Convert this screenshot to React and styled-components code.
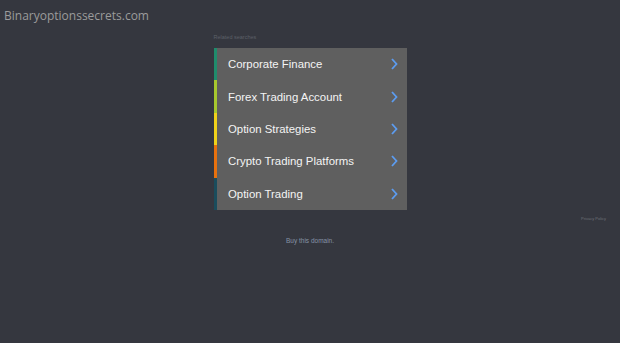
import React from 'react';
import styled, { createGlobalStyle } from 'styled-components';

const GlobalStyle = createGlobalStyle`
  html, body {
    margin: 0;
    padding: 0;
    background: #35373f;
  }
  body {
    font-family: "Liberation Sans", Arial, sans-serif;
  }
`;

const links = [
  { label: 'Corporate Finance', color: '#1f8c6c' },
  { label: 'Forex Trading Account', color: '#a6c82e' },
  { label: 'Option Strategies', color: '#f0d21a' },
  { label: 'Crypto Trading Platforms', color: '#e8710e' },
  { label: 'Option Trading', color: '#1a4c5c' },
];

const Chevron = () => (
  <svg width="7" height="12" viewBox="0 0 7 12" fill="none">
    <path d="M1 1 L5.5 6 L1 11" stroke="#5c9cf0" strokeWidth="1.8" strokeLinejoin="miter" />
  </svg>
);

const App = () => {
  return (
    <Page>
      <GlobalStyle />
      <Header>Binaryoptionssecrets.com</Header>
      <Main>
        <Column>
          <Caption>Related searches</Caption>
          <List>
            {links.map((l) => (
              <Row key={l.label} $accent={l.color}>
                <Label>{l.label}</Label>
                <Chevron />
              </Row>
            ))}
          </List>
        </Column>
        <FooterLine>
          <Privacy>Privacy Policy</Privacy>
        </FooterLine>
        <Buy>Buy this domain.</Buy>
      </Main>
    </Page>
  );
};

export default App;

const Page = styled.div`
  width: 620px;
  height: 343px;
  background: #35373f;
  overflow: hidden;
`;

const Header = styled.div`
  padding: 7px 0 0 4px;
  height: 20px;
  font-family: "Open Sans", sans-serif;
  font-size: 12px;
  color: #9b9b9b;
  line-height: 18px;
`;

const Main = styled.div`
  display: flex;
  flex-direction: column;
  align-items: center;
`;

const Column = styled.div`
  width: 193px;
  display: flex;
  flex-direction: column;
`;

const Caption = styled.div`
  font-size: 5.5px;
  color: #5c6068;
  height: 21px;
  line-height: 10px;
  padding-top: 5px;
  box-sizing: border-box;
`;

const List = styled.div`
  background: #5f5f5f;
  display: flex;
  flex-direction: column;
`;

const Row = styled.div`
  height: 32.4px;
  display: flex;
  align-items: center;
  justify-content: space-between;
  border-left: 3.5px solid ${(p) => p.$accent};
  padding: 0 9px 0 11.5px;
`;

const Label = styled.span`
  font-size: 11.4px;
  color: #f4f4f4;
`;

const FooterLine = styled.div`
  align-self: stretch;
  display: flex;
  justify-content: flex-end;
  padding: 6px 14px 0 0;
  height: 12px;
`;

const Privacy = styled.span`
  font-size: 4px;
  color: #6e7178;
`;

const Buy = styled.div`
  margin-top: 9px;
  font-size: 6.5px;
  color: #8593a6;
`;
